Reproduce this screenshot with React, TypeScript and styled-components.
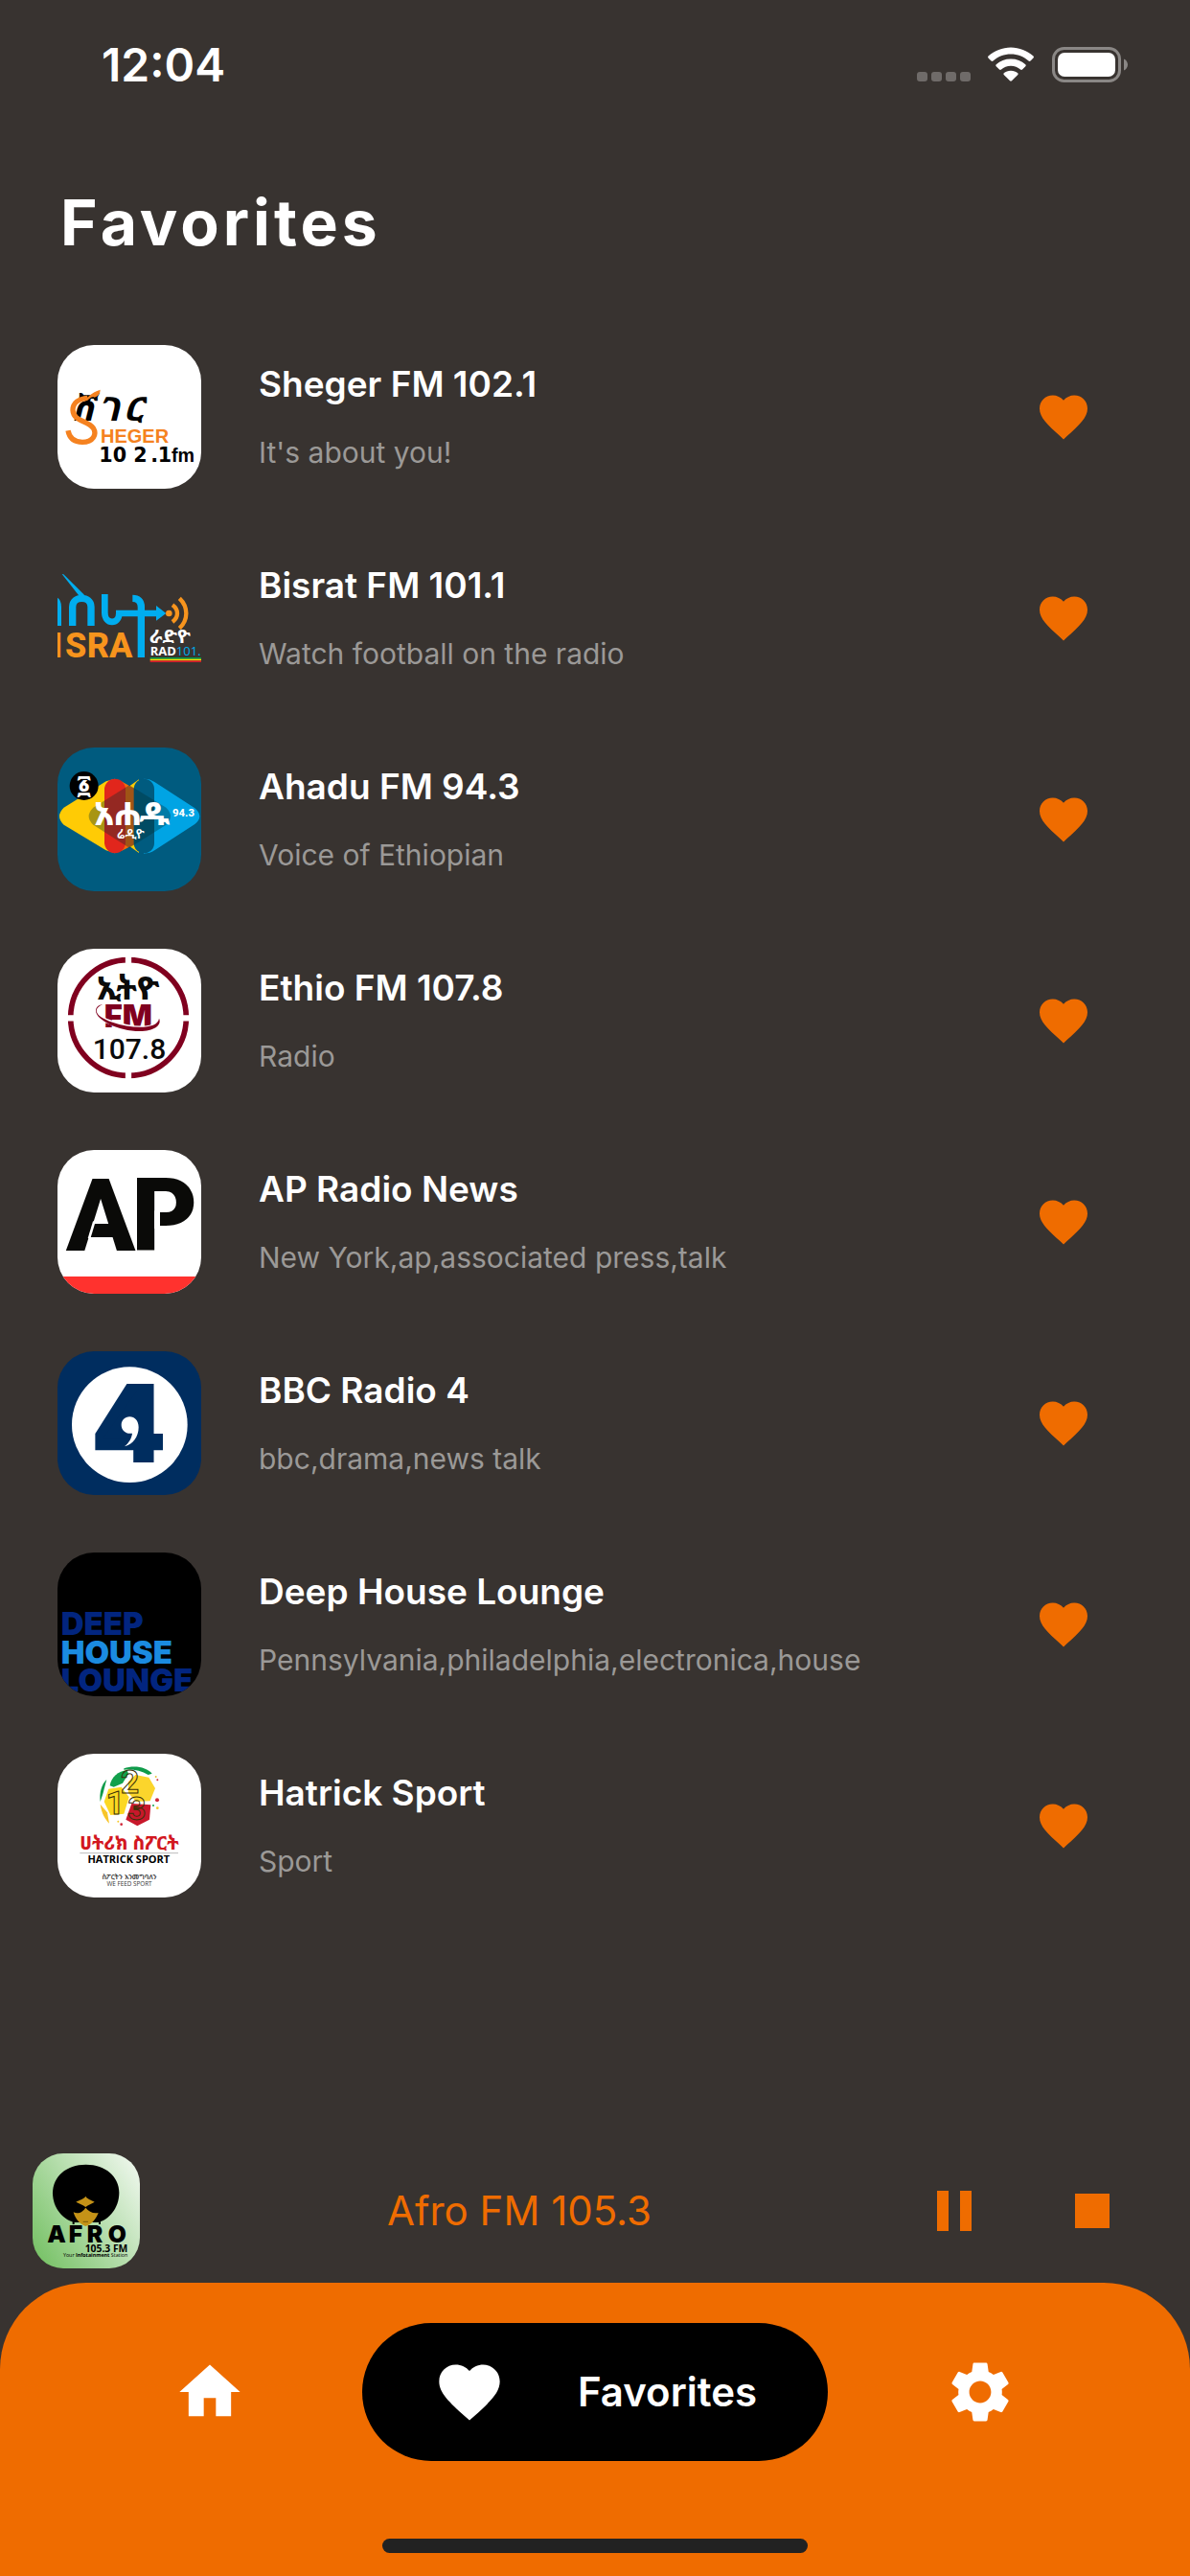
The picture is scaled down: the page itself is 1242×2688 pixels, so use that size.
import React from "react";
import styled, { createGlobalStyle } from "styled-components";
import { MdFavorite, MdHome, MdPause, MdSettings, MdStop } from "react-icons/md";

const orange = "#ef6c00";
const ethiopic = "'Noto Sans Ethiopic', 'Abyssinica SIL', 'Noto Sans', sans-serif";
const arial = "'Liberation Sans', sans-serif";
const roboto = "Roboto, sans-serif";
const inter = "Inter, sans-serif";
const openSans = "'Open Sans', sans-serif";

const GlobalStyle = createGlobalStyle`
  * { box-sizing: border-box; }
  body {
    margin: 0;
    background: #383330;
    color: #fff;
    font-family: Inter, "Noto Sans", sans-serif;
  }
  button { font: inherit; color: inherit; background: none; border: 0; padding: 0; cursor: pointer; }
`;

const Screen = styled.div`
  display: flex;
  flex-direction: column;
  min-height: 100vh;
`;

const StatusBar = styled.header`
  display: flex;
  align-items: center;
  justify-content: space-between;
  height: 136px;
  padding: 0 65px 0 106px;
`;

const Clock = styled.time`
  font-size: 48px;
  font-weight: 600;
  line-height: 60px;
`;

const StatusIcons = styled.svg`
  width: 220px;
  height: 38px;
`;

const Main = styled.main`
  flex: 1;
  display: flex;
  flex-direction: column;
  padding: 56px 60px 0;
`;

const PageTitle = styled.h1`
  margin: 0;
  padding-left: 3px;
  font-size: 66px;
  font-weight: 700;
  line-height: 80px;
  letter-spacing: 4px;
`;

const StationList = styled.ul`
  display: flex;
  flex-direction: column;
  gap: 60px;
  margin: 88px 0 0;
  padding: 0;
  list-style: none;
`;

const StationRow = styled.li`
  display: flex;
  align-items: center;
  gap: 60px;
  padding-right: 42px;
`;

const Cover = styled.svg<{ $width: number; $height: number; $radius: number }>`
  flex: none;
  width: ${(p) => p.$width}px;
  height: ${(p) => p.$height}px;
  border-radius: ${(p) => p.$radius}px;
`;

const StationText = styled.div`
  flex: 1;
  min-width: 0;
  display: flex;
  flex-direction: column;
  gap: 29px;
`;

const StationName = styled.h2`
  margin: 0;
  font-size: 37px;
  font-weight: 600;
  line-height: 44px;
`;

const StationTags = styled.p`
  margin: 0;
  color: #9b9997;
  font-size: 30px;
  line-height: 40px;
`;

const IconButton = styled.button<{ $size: number }>`
  display: grid;
  place-items: center;
  color: ${orange};
  svg {
    width: ${(p) => p.$size}px;
    height: ${(p) => p.$size}px;
  }
`;

const Player = styled.section`
  display: flex;
  align-items: center;
  padding: 15px 66px 15px 34px;
`;

const PlayerTitle = styled.p`
  flex: 1;
  margin: 0;
  padding-right: 22px;
  color: ${orange};
  font-size: 42px;
  line-height: 52px;
  text-align: center;
`;

const PlayerControls = styled.div`
  display: flex;
  gap: 72px;
`;

const BottomBar = styled.footer`
  display: flex;
  flex-direction: column;
  align-items: center;
  justify-content: space-between;
  height: 306px;
  padding: 42px 0 24px;
  border-radius: 90px 90px 0 0;
  background: ${orange};
`;

const Tabs = styled.nav`
  align-self: stretch;
  display: flex;
  align-items: center;
  justify-content: space-between;
  padding: 0 147px;
`;

const Tab = styled.button<{ $active?: boolean }>`
  display: flex;
  align-items: center;
  justify-content: center;
  gap: 75px;
  height: 144px;
  min-width: 144px;
  padding: ${(p) => (p.$active ? "0 74px" : "0")};
  border-radius: 72px;
  background: ${(p) => (p.$active ? "#000" : "transparent")};
  color: #fff;
  font-size: 42px;
  font-weight: 600;
  line-height: 52px;
  svg {
    width: 76px;
    height: 76px;
  }
`;

const HomeIndicator = styled.div`
  width: 444px;
  height: 15px;
  border-radius: 8px;
  background: #222;
`;

type ArtProps = { label: string; box: string; width?: number; height?: number; radius?: number; children: React.ReactNode };

const Art = ({ label, box, width = 150, height = 150, radius = 38, children }: ArtProps) => (
  <Cover $width={width} $height={height} $radius={radius} viewBox={box} role="img" aria-label={label}>
    {children}
  </Cover>
);

const ShegerArt = () => (
  <Art label="Sheger FM" box="0 0 450 450">
    <rect width="450" height="450" fill="#fff" />
    <text x="44 128 208" y="238" fontFamily={ethiopic} fontSize="104" fontWeight="800" fontStyle="italic">ሸገር</text>
    <path d="M33 268C38 296 58 304 78 304C112 304 124 280 112 260C96 236 50 240 48 204C48 182 66 168 94 166" fill="none" stroke="#f58220" strokeWidth="16" />
    <path d="M84 172C98 162 104 150 134 140C134 152 128 160 116 164C104 158 100 174 84 176Z" fill="#f58220" />
    <text x="135" y="307" fontFamily={arial} fontSize="60" fontWeight="700" fill="#f58220">HEGER</text>
    <text x="130 173 238 292 314" y="365" fontFamily="'DejaVu Sans', sans-serif" fontSize="62" fontWeight="700">102.1</text>
    <text x="357" y="365" fontFamily={arial} fontSize="59" fontWeight="700">fm</text>
  </Art>
);

const BisratArt = () => (
  <Art label="Bisrat FM" box="0 0 450 450" radius={0}>
    <g fill="none" stroke="#00adef" strokeWidth="22">
      <path d="M-16 168C-4 168 1 176 1 190V249" />
      <path d="M47 249V190C47 154 105 154 105 190V249" />
      <path d="M148 150V208C148 246 193 246 193 210H320" strokeWidth="20" />
      <path d="M235 163C252 163 262 172 262 190V348" />
    </g>
    <path d="M14 87L19 88L84 152L70 158Z" fill="#00adef" />
    <path d="M309 186L340 210L309 233Z" fill="#00adef" />
    <circle cx="349" cy="210" r="10" fill="#f7941d" />
    <g fill="none" stroke="#f7941d" strokeWidth="13">
      <path d="M360 184C380 198 380 222 360 237" />
      <path d="M382 163C410 190 410 230 382 257" />
    </g>
    <text x="-16 24 92 162" y="348" fontFamily={roboto} fontSize="108" fontWeight="800" fill="#f7941d">ISRA</text>
    <text x="288" y="304" fontFamily={ethiopic} fontSize="60" fontWeight="700" fill="#fff">ራድዮ</text>
    <text x="290" y="342" fontFamily={openSans} fontSize="39" fontWeight="700" fill="#fff">RAD<tspan fill="#00adef" fontWeight="400">101.</tspan></text>
    <rect x="290" y="348" width="160" height="5" fill="#009a49" />
    <rect x="290" y="353" width="160" height="5" fill="#fde100" />
    <rect x="290" y="358" width="160" height="5" fill="#d81e2c" />
  </Art>
);

const AhaduArt = () => (
  <Art label="Ahadu FM" box="0 0 450 450">
    <rect width="450" height="450" fill="#005b7f" />
    <path d="M152 106L20 188Q-8 215 20 242L152 322L180 331V98Z" fill="#ffcb05" />
    <path d="M213 130L255 100V330L213 300Z" fill="#ffcb05" />
    <path d="M270 98Q290 98 304 108L430 190Q460 215 430 240L304 322Q290 332 270 332Z" fill="#00a4e4" />
    <path d="M200 106L240 128V304L200 324Z" fill="#f26a0a" />
    <rect x="147" y="98" width="66" height="233" rx="33" fill="#e1261c" />
    <rect x="239" y="98" width="64" height="233" rx="32" fill="#005b7f" />
    <path d="M225 118L340 188Q368 215 340 242L225 314L112 242Q84 215 112 188Z" fill="#002b2e" opacity="0.34" />
    <circle cx="83" cy="120" r="45" fill="#000" />
    <text x="83" y="147" fontFamily={ethiopic} fontSize="72" fontWeight="800" textAnchor="middle" fill="#fff">፩</text>
    <text x="114 178 256" y="243" fontFamily={ethiopic} fontSize="102" fontWeight="800" fill="#fff">አሐዱ</text>
    <text x="186" y="284" fontFamily={ethiopic} fontSize="40" fontWeight="600" fill="#fff">ሬዲዮ</text>
    <text x="360" y="216" fontFamily={roboto} fontSize="34" fontWeight="800" fill="#fff">94.3</text>
  </Art>
);

const EthioArt = () => (
  <Art label="Ethio FM" box="0 0 450 450">
    <rect width="450" height="450" fill="#fff" />
    <circle cx="222" cy="216" r="181" fill="none" stroke="#80001f" strokeWidth="17" />
    <path d="M222 20V60M222 370V420M20 217H60M380 217H425" stroke="#fff" strokeWidth="19" />
    <text x="122" y="158" fontFamily={ethiopic} fontSize="100" fontWeight="800" fill="#0b0b0b">ኢትዮ</text>
    <text x="146" y="246" fontFamily={inter} fontSize="98" fontWeight="900" fill="#80001f">FM</text>
    <path d="M142 174C110 184 110 212 170 232C240 256 316 256 320 220" fill="none" stroke="#fff" strokeWidth="14" />
    <path d="M142 174C112 186 112 210 172 230C236 252 314 252 318 218C328 240 300 258 258 258C190 258 120 222 120 194C120 182 130 176 142 174Z" fill="#80001f" />
    <text x="110" y="344" fontFamily={roboto} fontSize="90" fontWeight="500" fill="#0b0b0b">107.8</text>
  </Art>
);

const ApArt = () => (
  <Art label="AP" box="0 0 450 450">
    <rect width="450" height="450" fill="#fff" />
    <rect y="396" width="450" height="54" fill="#ff322e" />
    <text x="27 232" y="314" fontFamily={roboto} fontSize="318" fontWeight="900" fill="#0a0a08">AP</text>
    <path d="M99 277L115 224" stroke="#fff" strokeWidth="8" />
    <rect x="303" y="190" width="18" height="56" fill="#fff" />
  </Art>
);

const BbcArt = () => (
  <Art label="BBC Radio 4" box="0 0 450 450">
    <rect width="450" height="450" fill="#002d5f" />
    <circle cx="226" cy="230" r="181" fill="#fff" />
    <text x="104" y="348" fontFamily={inter} fontSize="338" fontWeight="900" fill="#002d5f">4</text>
    <path d="M236 164V262H166Z" fill="#002d5f" stroke="#002d5f" strokeWidth="26" />
    <path d="M226 205C242 205 254 218 254 238C254 268 236 292 210 298C222 288 232 274 234 257C214 260 200 248 200 231C200 216 211 205 226 205Z" fill="#fff" />
  </Art>
);

const DeepHouseArt = () => (
  <Art label="Deep House Lounge" box="0 0 450 450">
    <rect width="450" height="450" fill="#000" />
    <g fontFamily={inter} fontSize="99" fontWeight="900" fill="#02257f">
      <text x="11" y="259">DEEP</text>
      <text x="11" y="347" fill="#1b8be0">HOUSE</text>
      <text x="11" y="435">LOUNGE</text>
    </g>
  </Art>
);

const HatrickArt = () => (
  <Art label="Hatrick Sport" box="0 0 450 450">
    <rect width="450" height="450" fill="#fff" />
    <path d="M208 46C240 34 280 42 296 62L284 66C262 52 236 48 208 50Z" fill="#0f9b4a" />
    <path d="M164 100C168 74 190 54 218 52L222 62L204 92L176 104Z" fill="#12a04c" />
    <path d="M154 80C138 96 130 122 134 150L142 126Z" fill="#0f9b4a" />
    <path d="M134 158C138 188 150 206 162 218L156 184Z" fill="#f7c52a" />
    <path d="M160 110L200 104L224 136L208 188L166 192L146 150Z" fill="#fcd822" />
    <path d="M222 88L244 66L286 74L306 108L290 148L246 150L222 122Z" fill="#fbd52c" />
    <path d="M232 156L292 160L288 206L250 226L214 206Z" fill="#c8182b" />
    <circle cx="312" cy="145" r="6" fill="#d0283a" />
    <circle cx="300" cy="162" r="3" fill="#12a04c" />
    <circle cx="313" cy="170" r="4" fill="#f4c92c" />
    <circle cx="308" cy="72" r="3" fill="#e8c43a" />
    <circle cx="313" cy="82" r="3" fill="#d0283a" />
    <circle cx="190" cy="212" r="3" fill="#f4c92c" />
    <circle cx="200" cy="221" r="4" fill="#d0283a" />
    <g fontFamily={roboto} fontSize="100" fontWeight="700" fill="none" stroke="#3a3008" strokeWidth="3">
      <text x="152" y="190">1</text>
      <text x="198" y="122">2</text>
      <text x="220" y="206">3</text>
    </g>
    <text x="225" y="300" fontFamily={ethiopic} fontSize="58" fontWeight="800" textAnchor="middle" fill="#d2181f">ሀትሪክ ስፖርት</text>
    <path d="M70 311H378" stroke="#999" strokeWidth="2" />
    <text x="223" y="342" fontFamily={openSans} fontSize="33" fontWeight="700" textAnchor="middle">HATRICK SPORT</text>
    <text x="225" y="392" fontFamily={ethiopic} fontSize="22" fontWeight="600" textAnchor="middle" fill="#333">ስፖርትን እንመግባለን</text>
    <text x="225" y="413" fontFamily={openSans} fontSize="19" textAnchor="middle" fill="#333">WE FEED SPORT</text>
  </Art>
);

const AfroArt = () => (
  <Art label="Afro FM" box="0 0 336 360" width={112} height={120} radius={32}>
    <defs>
      <linearGradient id="afro-green" x1="0" y1="0.85" x2="1" y2="0.15">
        <stop offset="0" stopColor="#78c267" />
        <stop offset="1" stopColor="#ecf6ea" />
      </linearGradient>
    </defs>
    <rect width="336" height="360" fill="url(#afro-green)" />
    <path d="M167 35C230 35 271 74 271 124C271 170 240 208 205 216H130C96 208 63 172 63 124C63 74 104 35 167 35Z" />
    <path d="M128 208V222M210 208V222" stroke="#000" strokeWidth="6" />
    <path d="M166 134C172 144 184 146 194 152C186 158 174 160 166 168C158 160 146 158 136 152C146 146 160 144 166 134Z" fill="#c49217" />
    <path d="M128 184C144 192 158 182 166 170C176 182 190 190 206 186C198 206 186 222 166 228C148 222 134 206 128 184Z" fill="#c49217" />
    <path d="M158 214H174" stroke="#7a5a0c" strokeWidth="3" />
    <text x="46 113 170 236" y="279" fontFamily={inter} fontSize="74" fontWeight="900">AFRO</text>
    <text x="298" y="308" fontFamily={openSans} fontSize="31" fontWeight="700" textAnchor="end">105.3 FM</text>
    <text x="298" y="324" fontFamily={openSans} fontSize="16" textAnchor="end">Your <tspan fontWeight="700">Infotainment</tspan> Station</text>
  </Art>
);

const stations = [
  { name: "Sheger FM 102.1", tags: "It's about you!", Logo: ShegerArt },
  { name: "Bisrat FM 101.1", tags: "Watch football on the radio", Logo: BisratArt },
  { name: "Ahadu FM 94.3", tags: "Voice of Ethiopian", Logo: AhaduArt },
  { name: "Ethio FM 107.8", tags: "Radio", Logo: EthioArt },
  { name: "AP Radio News", tags: "New York,ap,associated press,talk", Logo: ApArt },
  { name: "BBC Radio 4", tags: "bbc,drama,news talk", Logo: BbcArt },
  { name: "Deep House Lounge", tags: "Pennsylvania,philadelphia,electronica,house", Logo: DeepHouseArt },
  { name: "Hatrick Sport", tags: "Sport", Logo: HatrickArt },
];

export default function App() {
  return (
    <Screen>
      <GlobalStyle />
      <StatusBar>
        <Clock>12:04</Clock>
        <StatusIcons viewBox="0 0 220 38" aria-hidden="true">
          <g fill="#6f6b69">
            <rect x="0" y="26" width="11" height="10" rx="3" />
            <rect x="15" y="26" width="11" height="10" rx="3" />
            <rect x="30" y="26" width="11" height="10" rx="3" />
            <rect x="45" y="26" width="11" height="10" rx="3" />
          </g>
          <g fill="#fff">
            <path d="M98 0.500C107 0.500 115 4 121.500 9.500Q122.500 10.500 121.500 11.500L118.500 14.500Q117.500 15.300 116.500 14.500C111.500 10 105 7.500 98 7.500C91 7.500 84.500 10 79.500 14.500Q78.500 15.300 77.500 14.500L74.500 11.500Q73.500 10.500 74.500 9.500C81 4 89 0.500 98 0.500Z" />
            <path d="M98 12.500C104 12.500 109 14.500 113.300 18.300Q114.300 19.300 113.300 20.300L110 23.500Q109 24.300 108 23.500C105.300 21 102 19.700 98 19.700C94 19.700 90.700 21 88 23.500Q87 24.300 86 23.500L82.700 20.300Q81.700 19.300 82.700 18.300C87 14.500 92 12.500 98 12.500Z" />
            <path d="M98 24.700C101 24.700 103.300 25.700 105.300 27.300Q106 28.200 105.300 29L99 35.300Q98 36.200 97 35.300L90.700 29Q90 28.200 90.700 27.300C92.700 25.700 95 24.700 98 24.700Z" />
            <rect x="147" y="6" width="60" height="25" rx="7" />
          </g>
          <rect x="142.500" y="1.500" width="69" height="34" rx="11" fill="none" stroke="#8a8785" strokeWidth="3" />
          <path d="M216 12.500C218.500 13.500 220 16 220 18.500C220 21 218.500 23.500 216 24.500Z" fill="#8a8785" />
        </StatusIcons>
      </StatusBar>

      <Main>
        <PageTitle>Favorites</PageTitle>
        <StationList>
          {stations.map(({ name, tags, Logo }) => (
            <StationRow key={name}>
              <Logo />
              <StationText>
                <StationName>{name}</StationName>
                <StationTags>{tags}</StationTags>
              </StationText>
              <IconButton $size={60} aria-label={`Remove ${name} from favorites`}>
                <MdFavorite />
              </IconButton>
            </StationRow>
          ))}
        </StationList>
      </Main>

      <Player aria-label="Now playing">
        <AfroArt />
        <PlayerTitle>Afro FM 105.3</PlayerTitle>
        <PlayerControls>
          <IconButton $size={72} aria-label="Pause">
            <MdPause />
          </IconButton>
          <IconButton $size={72} aria-label="Stop">
            <MdStop />
          </IconButton>
        </PlayerControls>
      </Player>

      <BottomBar>
        <Tabs>
          <Tab aria-label="Home">
            <MdHome />
          </Tab>
          <Tab $active aria-current="page">
            <MdFavorite />
            Favorites
          </Tab>
          <Tab aria-label="Settings">
            <MdSettings />
          </Tab>
        </Tabs>
        <HomeIndicator />
      </BottomBar>
    </Screen>
  );
}
